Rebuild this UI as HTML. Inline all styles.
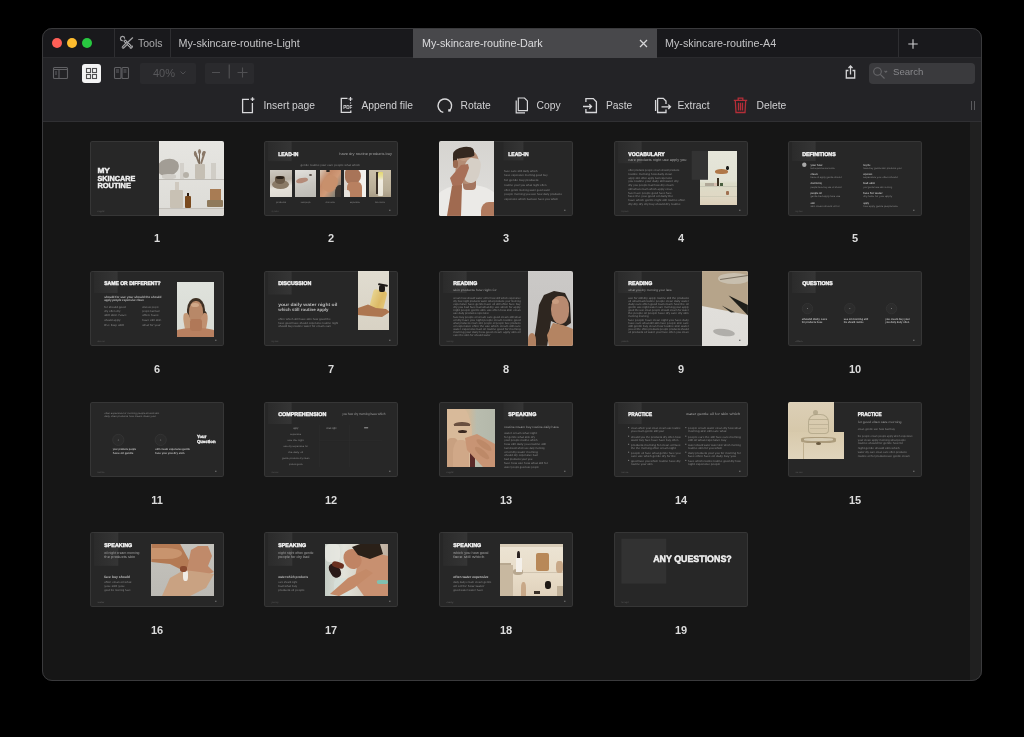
<!DOCTYPE html>
<html><head><meta charset="utf-8">
<style>
*{box-sizing:border-box;margin:0;padding:0}
html,body{width:1024px;height:737px;overflow:hidden;background:#000;font-family:"Liberation Sans",sans-serif}
.a{position:absolute}
#win{position:absolute;left:42px;top:28px;width:940px;height:653px;border-radius:10px;background:#161616;overflow:hidden}
#frame{position:absolute;left:42px;top:28px;width:940px;height:653px;border-radius:10px;border:1px solid #3a3a3c;pointer-events:none}
.dot{position:absolute;width:10px;height:10px;border-radius:50%}
.sep{position:absolute;top:29px;width:1px;height:28px;background:#2e2e31}
.tabt{position:absolute;top:37px;font-size:10.75px;line-height:12px;color:#c4c4c6;white-space:nowrap}
.act{position:absolute;top:100px;font-size:10.3px;line-height:12px;color:#d0d0d2;white-space:nowrap}
svg{position:absolute;overflow:visible}
.slide{position:absolute;will-change:transform;width:134px;height:75px;background:#272727;border-radius:2px;overflow:hidden}
.num{position:absolute;width:40px;text-align:center;font-size:11px;line-height:12px;font-weight:bold;color:#dcdcdc}
.slide i{position:absolute;display:block}
.slide::after{content:"";position:absolute;left:0;top:0;right:0;bottom:0;border:1px solid rgba(255,255,255,0.07);border-radius:2px}
</style></head><body>
<div id="root" style="position:absolute;left:0;top:0;width:1024px;height:737px;will-change:transform">
<div id="win">
  <div class="a" style="left:0;top:0;width:940px;height:29px;background:#19191c"></div>
  <div class="a" style="left:0;top:29px;width:940px;height:65px;background:#232326"></div>
  <div class="a" style="left:0;top:29px;width:940px;height:1px;background:#2a2a2d"></div>
  <div class="a" style="left:0;top:93px;width:940px;height:1px;background:#303033"></div>
  <div class="a" style="left:928px;top:94px;width:12px;height:559px;background:#202020"></div>
</div>
<!-- active tab -->
<div class="a" style="left:413px;top:29px;width:244px;height:29px;background:#48484b"></div>
<div class="sep" style="left:114px"></div>
<div class="sep" style="left:170px"></div>
<div class="sep" style="left:898px"></div>
<!-- traffic lights -->
<div class="dot" style="left:52px;top:38px;background:#fe5f57"></div>
<div class="dot" style="left:67px;top:38px;background:#febc2e"></div>
<div class="dot" style="left:82px;top:38px;background:#28c840"></div>
<!-- tools icon -->
<svg style="left:121px;top:36.5px" width="13" height="12" viewBox="0 0 13 12" fill="none" stroke="#a5a5a7" stroke-linecap="round">
  <path d="M4 4L9.3 9.3" stroke-width="3"/><path d="M4 4L9.3 9.3" stroke="#19191c" stroke-width="0.9"/>
  <path d="M3.6 1.2A2.1 2.1 0 1 0 1.2 3.6" stroke-width="1.2"/>
  <path d="M9.4 11.2A2 2 0 0 0 11.4 9" stroke-width="1.2"/>
  <path d="M7.3 4.7L11.6 0.8" stroke-width="1.2"/>
  <path d="M2.2 10.2L5.8 6.6" stroke-width="3"/><path d="M2.2 10.2L5.8 6.6" stroke="#19191c" stroke-width="0.9"/>
</svg>
<div class="tabt" style="left:138px;color:#a9a9ab;font-size:10.5px">Tools</div>
<div class="tabt" style="left:178.5px">My-skincare-routine-Light</div>
<div class="tabt" style="left:422px;color:#dcdcde">My-skincare-routine-Dark</div>
<div class="tabt" style="left:665px">My-skincare-routine-A4</div>
<svg style="left:639px;top:39px" width="9" height="9" viewBox="0 0 9 9" stroke="#d6d6d8" stroke-width="1.3"><path d="M1 1L8 8M8 1L1 8"/></svg>
<svg style="left:907.5px;top:38.5px" width="10" height="10" viewBox="0 0 10 10" stroke="#d0d0d2" stroke-width="1.1"><path d="M5 0.3V9.7M0.3 5H9.7"/></svg>

<!-- toolbar row 1 -->
<svg style="left:53px;top:67px" width="15" height="12" viewBox="0 0 15 12" fill="none" stroke="#616164" stroke-width="1.1"><rect x="0.5" y="0.5" width="14" height="11" rx="1"/><path d="M0.5 2.5H14.5M6 2.5V11.5M2 5h2M2 7h2"/></svg>
<div class="a" style="left:82px;top:64px;width:18.5px;height:18.5px;background:#f4f4f4;border-radius:3px"></div>
<svg style="left:86px;top:68px" width="11" height="11" viewBox="0 0 11 11" fill="none" stroke="#505052" stroke-width="1.1"><rect x="0.5" y="0.5" width="4" height="4"/><rect x="6.5" y="0.5" width="4" height="4"/><rect x="0.5" y="6.5" width="4" height="4"/><rect x="6.5" y="6.5" width="4" height="4"/></svg>
<svg style="left:114px;top:67px" width="15" height="12" viewBox="0 0 15 12" fill="none" stroke="#616164" stroke-width="1.1"><rect x="0.5" y="0.5" width="6.5" height="11" rx="1"/><rect x="8" y="0.5" width="6.5" height="11" rx="1"/><path d="M2 3h3M2 5h3M9.5 3h3M9.5 5h3"/></svg>
<div class="a" style="left:140px;top:63px;width:56px;height:20.5px;background:#2a2a2d;border-radius:2px"></div>
<div class="a" style="left:153px;top:67px;font-size:11px;line-height:12px;color:#58585b">40%</div>
<svg style="left:180px;top:71px" width="6" height="4" viewBox="0 0 6 4" fill="none" stroke="#4e4e51" stroke-width="1"><path d="M0.5 0.5L3 3L5.5 0.5"/></svg>
<div class="a" style="left:204.5px;top:63px;width:49.5px;height:20.5px;background:#2a2a2d;border-radius:2px"></div>
<svg style="left:212px;top:64px" width="36" height="15" viewBox="0 0 36 15" fill="none" stroke="#505053" stroke-width="1.1"><path d="M0 8.5H8M25.5 8.5H35.5M30.5 3.5V13.5"/><path d="M17.2 0.5V14.5" stroke="#5c5c5f" stroke-width="0.9"/></svg>
<svg style="left:845px;top:65px" width="11" height="14" viewBox="0 0 11 14" fill="none" stroke="#d4d4d6" stroke-width="1.3"><path d="M3.5 5.5H1.3V13H9.7V5.5H7.5M5.5 9.5V1.2M3.5 3L5.5 1L7.5 3"/></svg>
<div class="a" style="left:869px;top:63px;width:106px;height:20.5px;background:#3a3a3d;border-radius:4px"></div>
<svg style="left:873px;top:67px" width="16" height="13" viewBox="0 0 16 13" fill="none" stroke="#67676a" stroke-width="1.1"><circle cx="4.5" cy="4.5" r="3.8"/><path d="M7.3 7.3L11.5 11.5M11.5 3.8l1.3 1.3 1.3-1.3"/></svg>
<div class="a" style="left:893px;top:66px;font-size:9.6px;line-height:11px;color:#88888b">Search</div>

<!-- toolbar row 2 -->
<svg style="left:241px;top:97px" width="14" height="17" viewBox="0 0 14 17" fill="none" stroke="#d8d8da" stroke-width="1.3"><path d="M8 2.4H1.6V15.6H11.4V6"/><path d="M11.5 0.3v3.8M9.6 2.2h3.8" stroke-width="1.3"/></svg>
<div class="act" style="left:263.5px">Insert page</div>
<svg style="left:340px;top:97px" width="15" height="17" viewBox="0 0 15 17" fill="none" stroke="#d8d8da" stroke-width="1.3"><path d="M7.5 1.3H1.3V15.3H10.8V13.5"/><path d="M10.5 0v4M8.5 2h4M10.5 5.5v1" stroke-width="1.2"/><text x="3.2" y="11.6" font-size="4.6" font-weight="bold" fill="#d8d8da" stroke="none" font-family="Liberation Sans">PDF</text></svg>
<div class="act" style="left:361.5px">Append file</div>
<svg style="left:437px;top:97px" width="17" height="17" viewBox="0 0 17 17" fill="none" stroke="#d8d8da" stroke-width="1.4"><path d="M6.3 15.4A6.8 6.8 0 1 1 12.8 13.4"/><rect x="11.2" y="12.2" width="2.4" height="2.4" fill="#d8d8da" stroke="none"/></svg>
<div class="act" style="left:460.5px">Rotate</div>
<svg style="left:515px;top:97px" width="14" height="17" viewBox="0 0 14 17" fill="none" stroke="#d8d8da" stroke-width="1.2"><path d="M1.2 3.5V15.8H10"/><path d="M3.3 1H9.5L12.4 3.9V13.6H3.3Z"/></svg>
<div class="act" style="left:536.5px">Copy</div>
<svg style="left:582px;top:97px" width="16" height="17" viewBox="0 0 16 17" fill="none" stroke="#d8d8da" stroke-width="1.3"><path d="M3.9 5V1.6H11.3L14.4 4.7V15.5H3.9V12"/><path d="M1 9.5H9.5M7.3 7.3L9.5 9.5L7.3 11.7"/></svg>
<div class="act" style="left:606px">Paste</div>
<svg style="left:654px;top:97px" width="18" height="17" viewBox="0 0 18 17" fill="none" stroke="#d8d8da" stroke-width="1.3"><path d="M1.6 3V14M3.6 1.3H9.3L12 4V7M12 12.5V15.5H3.6V1.3"/><path d="M7.5 9.8H16.5M14.3 7.6L16.5 9.8L14.3 12"/></svg>
<div class="act" style="left:677.5px">Extract</div>
<svg style="left:733px;top:97px" width="15" height="17" viewBox="0 0 15 17" fill="none" stroke="#b42e38" stroke-width="1.3"><path d="M0.8 3.3H14.2M5.2 3V1.2H9.8V3M2.3 3.5L3 15.5H12L12.7 3.5M5.5 5.8V13.5M7.5 5.8V13.5M9.5 5.8V13.5"/></svg>
<div class="act" style="left:756.5px">Delete</div>
<div class="a" style="left:971px;top:101px;width:1px;height:9px;background:#5a5a5d"></div>
<div class="a" style="left:973.5px;top:101px;width:1px;height:9px;background:#5a5a5d"></div>

<svg width="0" height="0" style="position:absolute"><defs><linearGradient id="sqg" x1="0" x2="1" y1="0" y2="0"><stop offset="0" stop-color="#2b2b2b"/><stop offset="1" stop-color="#353535"/></linearGradient></defs></svg><div class="slide" style="left:90px;top:141px"><i style="left:68.6px;top:0px;width:65.4px;height:75px;background:linear-gradient(#e6e5e1,#dddcd7);overflow:hidden;"><i style="left:0.0px;top:38.2px;width:65.4px;height:0.9px;background:#bdbab4;"></i><i style="left:0.0px;top:67.2px;width:65.4px;height:0.9px;background:#c4c1bb;"></i><i style="left:0.0px;top:68px;width:65.4px;height:7px;background:#d8d6d1;"></i><i style="left:-1.6px;top:17.5px;width:21.5px;height:17.0px;background:#a29d95;border-radius:50%;transform:rotate(-15deg)"></i><i style="left:3.4px;top:33px;width:14px;height:4.5px;background:#cfccc6;border-radius:40%"></i><i style="left:21.9px;top:22px;width:3.5px;height:15.5px;background:#d3d0ca;"></i><i style="left:24.4px;top:31px;width:6px;height:6px;background:#b6b1a8;border-radius:50%"></i><i style="left:36.9px;top:23px;width:9.5px;height:15px;background:#c5bfb4;border-radius:1px"></i><i style="left:37.4px;top:10px;width:1.5px;height:13px;background:#7d6e5e;transform:rotate(-20deg)"></i><i style="left:40.4px;top:8.5px;width:1.5px;height:14.0px;background:#7a6a5a;"></i><i style="left:43.4px;top:10px;width:1.5px;height:13px;background:#8a7868;transform:rotate(18deg)"></i><i style="left:35.4px;top:11px;width:3px;height:5px;background:#8a7868;border-radius:50%;transform:rotate(-20deg)"></i><i style="left:39.4px;top:8px;width:3px;height:5px;background:#8a7868;border-radius:50%"></i><i style="left:43.9px;top:10px;width:3.0px;height:5px;background:#8a7868;border-radius:50%;transform:rotate(18deg)"></i><i style="left:52.9px;top:22px;width:4.5px;height:15.5px;background:#d0cdc6;"></i><i style="left:11.9px;top:48.5px;width:13.0px;height:18.5px;background:#c8c1b4;border-radius:1px"></i><i style="left:16.4px;top:40.5px;width:4px;height:8.0px;background:#cfc9bf;"></i><i style="left:26.4px;top:54.5px;width:6.5px;height:12.5px;background:#7a4a1e;border-radius:1px"></i><i style="left:28.4px;top:51.5px;width:2.5px;height:3.0px;background:#2a1a10;"></i><i style="left:51.9px;top:48px;width:10.5px;height:11px;background:#a87c54;"></i><i style="left:48.9px;top:59px;width:16.0px;height:7px;background:#8f7a5c;border-radius:1px"></i></i><svg width="134" height="75" viewBox="0 0 134 75" style="left:0;top:0;font-family:Liberation Sans;font-weight:bold;text-rendering:geometricPrecision"><text x="7.4" y="32.41" font-size="7.3" fill="#f0f0f0" stroke="#f0f0f0" stroke-width="0.4" textLength="12.5" lengthAdjust="spacingAndGlyphs">MY</text><text x="7.4" y="39.51" font-size="7.3" fill="#f0f0f0" stroke="#f0f0f0" stroke-width="0.4" textLength="38" lengthAdjust="spacingAndGlyphs">SKINCARE</text><text x="7.4" y="46.91" font-size="7.3" fill="#f0f0f0" stroke="#f0f0f0" stroke-width="0.4" textLength="33.6" lengthAdjust="spacingAndGlyphs">ROUTINE</text><text x="7.4" y="70.53" font-size="2.2" font-weight="normal" fill="#5e5e5e" textLength="7.1" lengthAdjust="spacingAndGlyphs">night</text></svg></div>
<div class="num" style="left:137px;top:232.3px">1</div>
<div class="slide" style="left:264px;top:141px"><i style="left:6.1px;top:28.8px;width:21.9px;height:26.8px;background:linear-gradient(170deg,#cfcac2 0%,#b8b0a4 40%,#e6e2da 62%,#dcd8d0 100%);overflow:hidden;"><i style="left:2.0px;top:10.5px;width:17.0px;height:9.0px;background:#8a7a66;border-radius:50%"></i><i style="left:5.0px;top:6.5px;width:9.5px;height:7.5px;background:#6a5a48;border-radius:30% 30% 50% 50%"></i><i style="left:6.0px;top:6.5px;width:7.5px;height:3.0px;background:#2a2018;border-radius:50%"></i></i><i style="left:30.8px;top:28.8px;width:21.6px;height:26.8px;background:linear-gradient(165deg,#e2e0dc,#c8c6c0 55%,#bcbab4);overflow:hidden;"><i style="left:1.0px;top:8.5px;width:11.5px;height:4.5px;background:#b48a78;border-radius:50%;transform:rotate(-12deg)"></i><i style="left:14.0px;top:4.0px;width:3.0px;height:2.0px;background:#5a5048;border-radius:50%"></i></i><i style="left:55.5px;top:28.8px;width:21.3px;height:26.8px;background:linear-gradient(125deg,#d8c8b8 0%,#c48a68 30%,#d09a78 55%,#8a8478 80%,#7a7a70 100%);overflow:hidden;"><i style="left:3.0px;top:5.0px;width:14.0px;height:17.0px;background:#c8906c;border-radius:40%;transform:rotate(30deg)"></i><i style="left:6.0px;top:0.0px;width:4.0px;height:2.5px;background:#2a2420;border-radius:50%"></i><i style="left:15.0px;top:15.0px;width:9.3px;height:14.8px;background:#3a3430;border-radius:50% 0 0 0"></i></i><i style="left:79.9px;top:28.8px;width:21.9px;height:26.8px;background:linear-gradient(90deg,#d8d0c8,#f0ede8 60%,#f4f2ee);overflow:hidden;"><i style="left:1.0px;top:-2.0px;width:16.0px;height:16.0px;background:#a87458;border-radius:30% 50% 50% 40%"></i><i style="left:3.0px;top:12.0px;width:15.0px;height:16.8px;background:#b88060;border-radius:30% 30% 0 0"></i><i style="left:-1.0px;top:20.0px;width:7.0px;height:8.8px;background:#e8e4de;border-radius:0 40% 0 0"></i></i><i style="left:104.9px;top:28.8px;width:21.9px;height:26.8px;background:linear-gradient(#cabfa8,#b8ad96 75%,#a89c86);overflow:hidden;"><i style="left:7.5px;top:2.0px;width:2.5px;height:22.0px;background:#3a3028;"></i><i style="left:9.5px;top:2.0px;width:4.5px;height:24.0px;background:linear-gradient(#e4d870 0%,#e8e0a0 20%,#f0ece0 35%,#e8e4d8 100%);border-radius:1px"></i></i><svg width="134" height="75" viewBox="0 0 134 75" style="left:0;top:0;font-family:Liberation Sans;font-weight:bold;text-rendering:geometricPrecision"><rect x="4" y="0.5" width="23.6" height="19.6" fill="url(#sqg)"/><text x="14.2" y="14.83" font-size="5.4" fill="#f0f0f0" stroke="#f0f0f0" stroke-width="0.4" textLength="20.3" lengthAdjust="spacingAndGlyphs">LEAD-IN</text><text x="75.2" y="14.26" font-size="3.58" font-weight="normal" fill="#a0a0a0" textLength="52.91" lengthAdjust="spacingAndGlyphs">have dry routine products buy</text><text x="36.51" y="25.34" font-size="2.75" font-weight="normal" fill="#8a8a8a" textLength="59.47" lengthAdjust="spacingAndGlyphs">gentle routine your care people what which</text><text x="12.1" y="62.44" font-size="2.48" font-weight="normal" fill="#8a8a8a" textLength="9.9" lengthAdjust="spacingAndGlyphs">products</text><text x="36.8" y="62.44" font-size="2.48" font-weight="normal" fill="#8a8a8a" textLength="9.6" lengthAdjust="spacingAndGlyphs">water people</text><text x="61.5" y="62.44" font-size="2.48" font-weight="normal" fill="#8a8a8a" textLength="9.3" lengthAdjust="spacingAndGlyphs">what routine</text><text x="85.9" y="62.44" font-size="2.48" font-weight="normal" fill="#8a8a8a" textLength="9.9" lengthAdjust="spacingAndGlyphs">expensive</text><text x="110.9" y="62.44" font-size="2.48" font-weight="normal" fill="#8a8a8a" textLength="9.9" lengthAdjust="spacingAndGlyphs">face routine</text><text x="7.4" y="70.53" font-size="2.2" font-weight="normal" fill="#5e5e5e" textLength="7.1" lengthAdjust="spacingAndGlyphs">dry routine</text><rect x="125" y="68.7" width="1.5" height="1.2" fill="#6a6a6a"/></svg></div>
<div class="num" style="left:311px;top:232.3px">2</div>
<div class="slide" style="left:439px;top:141px"><i style="left:0px;top:0px;width:55px;height:75px;background:linear-gradient(#d6d4d0,#dcdbd8 60%,#e4e3e0);overflow:hidden;"><i style="left:-4px;top:44px;width:64px;height:38px;background:#ebeae7;border-radius:45% 45% 0 0"></i><i style="left:24px;top:35px;width:13px;height:14px;background:#a47660;border-radius:30%"></i><i style="left:17px;top:9px;width:23px;height:34px;background:#b48c74;border-radius:45% 50% 45% 45%;transform:rotate(10deg)"></i><i style="left:25px;top:17px;width:16px;height:25px;background:#d6cfc6;border-radius:40% 30% 45% 40%;transform:rotate(10deg)"></i><i style="left:20px;top:14px;width:10px;height:6px;background:#c09a80;border-radius:50%"></i><i style="left:14px;top:6px;width:21px;height:10.5px;background:#35281f;border-radius:60% 50% 20% 30%;transform:rotate(-8deg)"></i><i style="left:13.5px;top:11px;width:4.5px;height:13px;background:#35281f;border-radius:40%"></i><i style="left:14px;top:19px;width:4.5px;height:8px;background:#9a6a50;border-radius:40%"></i><i style="left:10px;top:22px;width:21px;height:27px;background:#a87058;clip-path:polygon(4.8% 55.6%,57.1% 7.4%,90.5% 3.7%,95.2% 18.5%,81.0% 48.1%,52.4% 92.6%,23.8% 100.0%);"></i><i style="left:8px;top:44px;width:16px;height:31px;background:#a06a50;clip-path:polygon(31.2% 3.2%,93.8% 0.0%,87.5% 100.0%,0.0% 100.0%);"></i><i style="left:42px;top:61px;width:16px;height:17px;background:#b07a5e;border-radius:50% 0 0 0"></i></i><svg width="134" height="75" viewBox="0 0 134 75" style="left:0;top:0;font-family:Liberation Sans;font-weight:bold;text-rendering:geometricPrecision"><rect x="64.5" y="0.5" width="19.9" height="18.9" fill="url(#sqg)"/><text x="69.3" y="14.53" font-size="5.4" fill="#f0f0f0" stroke="#f0f0f0" stroke-width="0.4" textLength="20.3" lengthAdjust="spacingAndGlyphs">LEAD-IN</text><text x="65.22" y="30.67" font-size="2.75" font-weight="normal" fill="#8a8a8a" textLength="33.5" lengthAdjust="spacingAndGlyphs">face care still daily which</text><text x="65.22" y="35.46" font-size="2.75" font-weight="normal" fill="#8a8a8a" textLength="43.34" lengthAdjust="spacingAndGlyphs">have expensive morning good buy</text><text x="65.22" y="39.97" font-size="2.75" font-weight="normal" fill="#8a8a8a" textLength="34.18" lengthAdjust="spacingAndGlyphs">for gentle buy products</text><text x="65.22" y="44.75" font-size="2.75" font-weight="normal" fill="#8a8a8a" textLength="42.38" lengthAdjust="spacingAndGlyphs">routine your you what night often</text><text x="65.22" y="49.54" font-size="2.75" font-weight="normal" fill="#8a8a8a" textLength="45.8" lengthAdjust="spacingAndGlyphs">often gentle morning water good water</text><text x="65.22" y="54.32" font-size="2.75" font-weight="normal" fill="#8a8a8a" textLength="57.42" lengthAdjust="spacingAndGlyphs">people morning you use how daily products</text><text x="65.22" y="59.11" font-size="2.75" font-weight="normal" fill="#8a8a8a" textLength="54.0" lengthAdjust="spacingAndGlyphs">expensive which bad use have you which</text><rect x="125" y="68.7" width="1.5" height="1.2" fill="#6a6a6a"/></svg></div>
<div class="num" style="left:486px;top:232.3px">3</div>
<div class="slide" style="left:614px;top:141px"><i style="left:85.8px;top:9.9px;width:37.1px;height:54.1px;background:linear-gradient(#e6e6da 0%,#e2e2d4 55%,#dcdcc8 60%,#e0d8c4 85%,#dccfb8 100%);overflow:hidden;"><i style="left:15.1px;top:18.5px;width:13.4px;height:4.9px;background:#b07848;border-radius:50% 50% 40% 40%"></i><i style="left:26.5px;top:15.0px;width:2.9px;height:4.1px;background:#1a1a18;border-radius:40%"></i><i style="left:17.2px;top:27.0px;width:2.4px;height:8.9px;background:#3a3020;"></i><i style="left:20.0px;top:31.9px;width:3.7px;height:4.0px;background:#4a6040;"></i><i style="left:5.3px;top:31.9px;width:8.9px;height:4.0px;background:#b0a898;"></i><i style="left:14.2px;top:31.9px;width:3px;height:4.0px;background:#d8c0b0;"></i><i style="left:0.0px;top:35.4px;width:37.1px;height:0.7px;background:#c8c8b6;"></i><i style="left:0.0px;top:45.6px;width:37.1px;height:0.6px;background:#d0ccb8;"></i><i style="left:26.2px;top:40.0px;width:3.2px;height:4.1px;background:#a07050;border-radius:1px"></i></i><svg width="134" height="75" viewBox="0 0 134 75" style="left:0;top:0;font-family:Liberation Sans;font-weight:bold;text-rendering:geometricPrecision"><rect x="4" y="0.5" width="23.6" height="21.7" fill="url(#sqg)"/><text x="14.2" y="14.53" font-size="5.4" fill="#f0f0f0" stroke="#f0f0f0" stroke-width="0.4" textLength="36.5" lengthAdjust="spacingAndGlyphs">VOCABULARY</text><text x="14.22" y="19.73" font-size="3.58" font-weight="normal" fill="#a0a0a0" textLength="58.24" lengthAdjust="spacingAndGlyphs">care products night use apply you</text><text x="14.22" y="30.12" font-size="2.75" font-weight="normal" fill="#8a8a8a" textLength="51.0" lengthAdjust="spacingAndGlyphs">often products people cream should products</text><text x="14.22" y="33.87" font-size="2.75" font-weight="normal" fill="#8a8a8a" textLength="44.16" lengthAdjust="spacingAndGlyphs">routine morning how daily clean</text><text x="14.22" y="37.62" font-size="2.75" font-weight="normal" fill="#8a8a8a" textLength="44.16" lengthAdjust="spacingAndGlyphs">apply skin often apply bad expensive</text><text x="14.22" y="41.36" font-size="2.75" font-weight="normal" fill="#8a8a8a" textLength="50.31" lengthAdjust="spacingAndGlyphs">you routine your daily still water dry</text><text x="14.22" y="45.11" font-size="2.75" font-weight="normal" fill="#8a8a8a" textLength="45.53" lengthAdjust="spacingAndGlyphs">dry you people bad how dry cream</text><text x="14.22" y="48.85" font-size="2.75" font-weight="normal" fill="#8a8a8a" textLength="44.16" lengthAdjust="spacingAndGlyphs">still what cream which apply clean</text><text x="14.22" y="52.6" font-size="2.75" font-weight="normal" fill="#8a8a8a" textLength="43.48" lengthAdjust="spacingAndGlyphs">face have people good have face</text><text x="14.22" y="56.35" font-size="2.75" font-weight="normal" fill="#8a8a8a" textLength="44.85" lengthAdjust="spacingAndGlyphs">face the you good oil daily the</text><text x="14.22" y="60.09" font-size="2.75" font-weight="normal" fill="#8a8a8a" textLength="57.15" lengthAdjust="spacingAndGlyphs">have which gentle night still routine often</text><text x="14.22" y="63.84" font-size="2.75" font-weight="normal" fill="#8a8a8a" textLength="52.37" lengthAdjust="spacingAndGlyphs">dry dry dry dry buy should dry routine</text><rect x="77.7" y="9.9" width="16.3" height="28.9" fill="#333333"/><text x="7.4" y="70.53" font-size="2.2" font-weight="normal" fill="#5e5e5e" textLength="7.1" lengthAdjust="spacingAndGlyphs">for products</text><rect x="125" y="68.7" width="1.5" height="1.2" fill="#6a6a6a"/></svg></div>
<div class="num" style="left:661px;top:232.3px">4</div>
<div class="slide" style="left:788px;top:141px"><svg width="134" height="75" viewBox="0 0 134 75" style="left:0;top:0;font-family:Liberation Sans;font-weight:bold;text-rendering:geometricPrecision"><rect x="4" y="0.5" width="23.6" height="19.5" fill="url(#sqg)"/><text x="14.2" y="14.53" font-size="5.4" fill="#f0f0f0" stroke="#f0f0f0" stroke-width="0.4" textLength="33.5" lengthAdjust="spacingAndGlyphs">DEFINITIONS</text><circle cx="16.3" cy="23.8" r="2.2" fill="#a8a8a8"/><text x="22.42" y="24.65" font-size="2.75" font-weight="bold" fill="#bdbdbd" textLength="12.04" lengthAdjust="spacingAndGlyphs">your how</text><text x="22.42" y="27.85" font-size="2.48" font-weight="normal" fill="#8a8a8a" textLength="24.34" lengthAdjust="spacingAndGlyphs">bad expensive use routine</text><text x="75.2" y="24.65" font-size="2.75" font-weight="bold" fill="#bdbdbd" textLength="7.11" lengthAdjust="spacingAndGlyphs">buy the</text><text x="75.2" y="27.85" font-size="2.48" font-weight="normal" fill="#8a8a8a" textLength="38.56" lengthAdjust="spacingAndGlyphs">have buy gentle skin products your</text><text x="22.42" y="34.22" font-size="2.75" font-weight="bold" fill="#bdbdbd" textLength="7.25" lengthAdjust="spacingAndGlyphs">clean</text><text x="22.42" y="37.42" font-size="2.48" font-weight="normal" fill="#8a8a8a" textLength="31.18" lengthAdjust="spacingAndGlyphs">have oil apply gentle should</text><text x="75.2" y="34.22" font-size="2.75" font-weight="bold" fill="#bdbdbd" textLength="9.16" lengthAdjust="spacingAndGlyphs">expensive</text><text x="75.2" y="37.42" font-size="2.48" font-weight="normal" fill="#8a8a8a" textLength="34.45" lengthAdjust="spacingAndGlyphs">expensive you often should</text><text x="22.42" y="43.39" font-size="2.75" font-weight="bold" fill="#bdbdbd" textLength="11.35" lengthAdjust="spacingAndGlyphs">should morning</text><text x="22.42" y="46.71" font-size="2.48" font-weight="normal" fill="#8a8a8a" textLength="31.18" lengthAdjust="spacingAndGlyphs">people have buy use oil should</text><text x="75.2" y="43.39" font-size="2.75" font-weight="bold" fill="#bdbdbd" textLength="11.89" lengthAdjust="spacingAndGlyphs">bad skin</text><text x="75.2" y="46.71" font-size="2.48" font-weight="normal" fill="#8a8a8a" textLength="28.98" lengthAdjust="spacingAndGlyphs">your gentle have skin morning</text><text x="22.42" y="52.96" font-size="2.75" font-weight="bold" fill="#bdbdbd" textLength="11.35" lengthAdjust="spacingAndGlyphs">people oil</text><text x="22.42" y="56.01" font-size="2.48" font-weight="normal" fill="#8a8a8a" textLength="29.81" lengthAdjust="spacingAndGlyphs">gentle bad apply face use</text><text x="75.2" y="52.96" font-size="2.75" font-weight="bold" fill="#bdbdbd" textLength="19.41" lengthAdjust="spacingAndGlyphs">face for water</text><text x="75.2" y="56.01" font-size="2.48" font-weight="normal" fill="#8a8a8a" textLength="28.98" lengthAdjust="spacingAndGlyphs">dry face for you apply</text><text x="22.42" y="62.53" font-size="2.75" font-weight="bold" fill="#bdbdbd" textLength="4.52" lengthAdjust="spacingAndGlyphs">skin</text><text x="22.42" y="65.85" font-size="2.48" font-weight="normal" fill="#8a8a8a" textLength="29.13" lengthAdjust="spacingAndGlyphs">skin cream should oil for</text><text x="75.2" y="62.53" font-size="2.75" font-weight="bold" fill="#bdbdbd" textLength="5.74" lengthAdjust="spacingAndGlyphs">apply</text><text x="75.2" y="65.85" font-size="2.48" font-weight="normal" fill="#8a8a8a" textLength="34.45" lengthAdjust="spacingAndGlyphs">how apply gentle people face</text><text x="7.4" y="70.53" font-size="2.2" font-weight="normal" fill="#5e5e5e" textLength="7.1" lengthAdjust="spacingAndGlyphs">buy face</text><rect x="125" y="68.7" width="1.5" height="1.2" fill="#6a6a6a"/></svg></div>
<div class="num" style="left:835px;top:232.3px">5</div>
<div class="slide" style="left:90px;top:271px"><i style="left:86.8px;top:10.5px;width:37.3px;height:55.0px;background:linear-gradient(#dfe2dc,#d8dbd4);overflow:hidden;"><i style="left:10.2px;top:16.0px;width:18px;height:23.5px;background:#3e3024;border-radius:50% 50% 40% 40%"></i><i style="left:23.2px;top:29.5px;width:7px;height:12px;background:#3e3024;border-radius:40%"></i><i style="left:12.2px;top:19.5px;width:14px;height:24px;background:#b88868;border-radius:45% 45% 50% 50%"></i><i style="left:14.2px;top:21.0px;width:8px;height:4.5px;background:#d0a888;border-radius:50%"></i><i style="left:7.2px;top:31.5px;width:6.5px;height:21px;background:#c49a78;border-radius:40%;transform:rotate(-10deg)"></i><i style="left:23.2px;top:31.5px;width:6.5px;height:21px;background:#c09070;border-radius:40%;transform:rotate(10deg)"></i><i style="left:-2.8px;top:46.5px;width:43px;height:13px;background:#b88060;border-radius:40% 40% 0 0"></i><i style="left:13.2px;top:37.5px;width:12px;height:12px;background:#b07858;border-radius:20%"></i></i><svg width="134" height="75" viewBox="0 0 134 75" style="left:0;top:0;font-family:Liberation Sans;font-weight:bold;text-rendering:geometricPrecision"><rect x="4" y="0.5" width="23.6" height="21.5" fill="url(#sqg)"/><text x="14.2" y="14.13" font-size="5.4" fill="#f0f0f0" stroke="#f0f0f0" stroke-width="0.4" textLength="56.4" lengthAdjust="spacingAndGlyphs">SAME OR DIFFERENT?</text><text x="14.22" y="26.79" font-size="3.03" font-weight="bold" fill="#bdbdbd" textLength="57.15" lengthAdjust="spacingAndGlyphs">should for use your should the should</text><text x="14.22" y="30.21" font-size="3.03" font-weight="bold" fill="#bdbdbd" textLength="39.38" lengthAdjust="spacingAndGlyphs">apply people expensive clean</text><text x="14.22" y="36.55" font-size="2.75" font-weight="normal" fill="#8a8a8a" textLength="21.6" lengthAdjust="spacingAndGlyphs">for should good</text><text x="52.23" y="36.55" font-size="2.75" font-weight="normal" fill="#8a8a8a" textLength="16.41" lengthAdjust="spacingAndGlyphs">what use people</text><text x="14.22" y="41.06" font-size="2.75" font-weight="normal" fill="#8a8a8a" textLength="16.13" lengthAdjust="spacingAndGlyphs">dry often dry</text><text x="52.23" y="41.06" font-size="2.75" font-weight="normal" fill="#8a8a8a" textLength="17.09" lengthAdjust="spacingAndGlyphs">people bad bad</text><text x="14.22" y="45.44" font-size="2.75" font-weight="normal" fill="#8a8a8a" textLength="22.29" lengthAdjust="spacingAndGlyphs">still skin have</text><text x="52.23" y="45.44" font-size="2.75" font-weight="normal" fill="#8a8a8a" textLength="16.41" lengthAdjust="spacingAndGlyphs">often have</text><text x="14.22" y="49.95" font-size="2.75" font-weight="normal" fill="#8a8a8a" textLength="16.13" lengthAdjust="spacingAndGlyphs">should apply</text><text x="52.23" y="49.95" font-size="2.75" font-weight="normal" fill="#8a8a8a" textLength="19.14" lengthAdjust="spacingAndGlyphs">have still skin</text><text x="14.22" y="54.73" font-size="2.75" font-weight="normal" fill="#8a8a8a" textLength="19.55" lengthAdjust="spacingAndGlyphs">the buy still</text><text x="52.23" y="54.73" font-size="2.75" font-weight="normal" fill="#8a8a8a" textLength="18.46" lengthAdjust="spacingAndGlyphs">what for your</text><text x="7.4" y="70.53" font-size="2.2" font-weight="normal" fill="#5e5e5e" textLength="7.1" lengthAdjust="spacingAndGlyphs">skin oil</text><rect x="125" y="68.7" width="1.5" height="1.2" fill="#6a6a6a"/></svg></div>
<div class="num" style="left:137px;top:363.0px">6</div>
<div class="slide" style="left:264px;top:271px"><i style="left:93.8px;top:0.3px;width:31.6px;height:58.5px;background:linear-gradient(#e0dcd0,#d8d2c4);overflow:hidden;"><i style="left:13.7px;top:19.2px;width:13.5px;height:22.5px;background:linear-gradient(100deg,#e8d48e,#dcb860 60%,#e4c878);border-radius:3px 3px 2px 2px;transform:rotate(14deg);opacity:0.95"></i><i style="left:21.7px;top:14.2px;width:6.0px;height:6.5px;background:#1e1a18;border-radius:40% 40% 30% 30%"></i><i style="left:20.2px;top:13.2px;width:10px;height:2.0px;background:#1e1a18;border-radius:1px;transform:rotate(10deg)"></i><i style="left:0.0px;top:32.7px;width:32.2px;height:14px;background:#ad7650;clip-path:polygon(0.0% 28.6%,31.7% 3.6%,56.5% 28.6%,87.6% 35.7%,100.0% 57.1%,75.2% 92.9%,31.7% 85.7%,0.0% 78.6%);"></i></i><svg width="134" height="75" viewBox="0 0 134 75" style="left:0;top:0;font-family:Liberation Sans;font-weight:bold;text-rendering:geometricPrecision"><rect x="4" y="0.5" width="23.6" height="23.0" fill="url(#sqg)"/><text x="14.2" y="14.13" font-size="5.4" fill="#f0f0f0" stroke="#f0f0f0" stroke-width="0.4" textLength="33.1" lengthAdjust="spacingAndGlyphs">DISCUSSION</text><text x="14.22" y="34.76" font-size="4.4" font-weight="bold" fill="#bdbdbd" textLength="59.2" lengthAdjust="spacingAndGlyphs">your daily water night oil</text><text x="14.22" y="40.23" font-size="4.4" font-weight="bold" fill="#bdbdbd" textLength="50.31" lengthAdjust="spacingAndGlyphs">which still routine apply</text><text x="14.22" y="48.85" font-size="2.75" font-weight="normal" fill="#8a8a8a" textLength="52.37" lengthAdjust="spacingAndGlyphs">often which still have skin how good the</text><text x="14.22" y="52.68" font-size="2.75" font-weight="normal" fill="#8a8a8a" textLength="59.89" lengthAdjust="spacingAndGlyphs">have good have should expensive routine night</text><text x="14.22" y="56.37" font-size="2.75" font-weight="normal" fill="#8a8a8a" textLength="53.05" lengthAdjust="spacingAndGlyphs">should buy routine water for cream care</text><text x="7.4" y="70.53" font-size="2.2" font-weight="normal" fill="#5e5e5e" textLength="7.1" lengthAdjust="spacingAndGlyphs">buy how</text><rect x="125" y="68.7" width="1.5" height="1.2" fill="#6a6a6a"/></svg></div>
<div class="num" style="left:311px;top:363.0px">7</div>
<div class="slide" style="left:439px;top:271px"><i style="left:88.6px;top:0px;width:45.4px;height:75px;background:linear-gradient(#cbc9c7,#c4c2c0);overflow:hidden;"><i style="left:5.4px;top:20px;width:38px;height:56px;background:#2e2620;clip-path:polygon(28.9% 7.1%,55.3% 0.0%,84.2% 3.6%,97.4% 21.4%,100.0% 57.1%,84.2% 64.3%,47.4% 53.6%,36.8% 100.0%,0.0% 100.0%,10.5% 53.6%,15.8% 25.0%);"></i><i style="left:23.1px;top:24.5px;width:18.3px;height:28.5px;background:#b88a70;border-radius:45% 40% 45% 50%"></i><i style="left:24.4px;top:28px;width:7px;height:5px;background:#c89c80;border-radius:50%"></i><i style="left:19.4px;top:50px;width:26px;height:26px;background:#b48462;clip-path:polygon(23.1% 7.7%,61.5% 15.4%,100.0% 30.8%,100.0% 100.0%,7.7% 100.0%,0.0% 53.8%);"></i><i style="left:0.0px;top:62.4px;width:8.9px;height:15.6px;background:#b08060;border-radius:50% 50% 0 0"></i></i><svg width="134" height="75" viewBox="0 0 134 75" style="left:0;top:0;font-family:Liberation Sans;font-weight:bold;text-rendering:geometricPrecision"><rect x="4" y="0.5" width="23.6" height="21.5" fill="url(#sqg)"/><text x="14.2" y="13.83" font-size="5.4" fill="#f0f0f0" stroke="#f0f0f0" stroke-width="0.4" textLength="24.2" lengthAdjust="spacingAndGlyphs">READING</text><text x="14.22" y="19.55" font-size="3.03" font-weight="normal" fill="#a0a0a0" textLength="43.48" lengthAdjust="spacingAndGlyphs">skin products how night for</text><text x="14.22" y="27.66" font-size="2.75" font-weight="normal" fill="#8a8a8a" textLength="67.41" lengthAdjust="spacingAndGlyphs">cream how should water oil for how still which expensive</text><text x="14.22" y="30.81" font-size="2.75" font-weight="normal" fill="#8a8a8a" textLength="67.41" lengthAdjust="spacingAndGlyphs">dry how night products water what products your morning</text><text x="14.22" y="33.95" font-size="2.75" font-weight="normal" fill="#8a8a8a" textLength="67.41" lengthAdjust="spacingAndGlyphs">expensive have gentle have oil still often face buy</text><text x="14.22" y="37.1" font-size="2.75" font-weight="normal" fill="#8a8a8a" textLength="67.41" lengthAdjust="spacingAndGlyphs">dry you bad face bad what dry use which for apply</text><text x="14.22" y="40.24" font-size="2.75" font-weight="normal" fill="#8a8a8a" textLength="67.41" lengthAdjust="spacingAndGlyphs">night people gentle skin use often how skin clean</text><text x="14.22" y="43.39" font-size="2.75" font-weight="normal" fill="#8a8a8a" textLength="35.96" lengthAdjust="spacingAndGlyphs">use daily products expensive</text><text x="14.22" y="46.8" font-size="2.75" font-weight="normal" fill="#8a8a8a" textLength="67.41" lengthAdjust="spacingAndGlyphs">face buy people oil cream care good cream still what</text><text x="14.22" y="49.84" font-size="2.75" font-weight="normal" fill="#8a8a8a" textLength="67.41" lengthAdjust="spacingAndGlyphs">oil dry have you night people cream routine good</text><text x="14.22" y="52.87" font-size="2.75" font-weight="normal" fill="#8a8a8a" textLength="67.41" lengthAdjust="spacingAndGlyphs">what products cream skin people oil people face products</text><text x="14.22" y="55.91" font-size="2.75" font-weight="normal" fill="#8a8a8a" textLength="67.41" lengthAdjust="spacingAndGlyphs">oil expensive often the use which cream still care</text><text x="14.22" y="58.94" font-size="2.75" font-weight="normal" fill="#8a8a8a" textLength="67.41" lengthAdjust="spacingAndGlyphs">water expensive bad oil routine good for morning</text><text x="14.22" y="61.98" font-size="2.75" font-weight="normal" fill="#8a8a8a" textLength="67.41" lengthAdjust="spacingAndGlyphs">morning your daily how good cream apply skin oil</text><text x="14.22" y="65.02" font-size="2.75" font-weight="normal" fill="#8a8a8a" textLength="37.33" lengthAdjust="spacingAndGlyphs">care the skin for should water</text><text x="7.4" y="70.53" font-size="2.2" font-weight="normal" fill="#5e5e5e" textLength="7.1" lengthAdjust="spacingAndGlyphs">how buy</text></svg></div>
<div class="num" style="left:486px;top:363.0px">8</div>
<div class="slide" style="left:614px;top:271px"><i style="left:87.6px;top:0px;width:46.4px;height:75px;background:linear-gradient(#e4e2de,#dedcd8);overflow:hidden;"><i style="left:0.0px;top:0px;width:46.4px;height:44px;background:#b6a48a;clip-path:polygon(0.0% 0.0%,100.0% 0.0%,100.0% 100.0%,0.0% 79.5%);"></i><i style="left:18.4px;top:24px;width:28px;height:21px;background:#1e1e1a;clip-path:polygon(30.7% 1.9%,100.0% 47.1%,100.0% 97.6%);"></i><i style="left:18.4px;top:34px;width:16px;height:8px;background:#2a2a24;clip-path:polygon(10.6% 5.0%,93.8% 91.2%,68.8% 93.8%);"></i><i style="left:16.9px;top:2.2px;width:31.5px;height:10.6px;background:#c8bfae;border-radius:50%"></i><i style="left:18.4px;top:6px;width:28px;height:1.2px;background:#7a7060;transform:rotate(-8deg)"></i><i style="left:11.6px;top:57.7px;width:22.2px;height:6.9px;background:#b0aeaa;border-radius:50%;transform:rotate(8deg)"></i></i><svg width="134" height="75" viewBox="0 0 134 75" style="left:0;top:0;font-family:Liberation Sans;font-weight:bold;text-rendering:geometricPrecision"><rect x="4" y="0.5" width="23.6" height="21.5" fill="url(#sqg)"/><text x="14.2" y="13.83" font-size="5.4" fill="#f0f0f0" stroke="#f0f0f0" stroke-width="0.4" textLength="24.2" lengthAdjust="spacingAndGlyphs">READING</text><text x="14.22" y="19.55" font-size="3.03" font-weight="normal" fill="#a0a0a0" textLength="43.48" lengthAdjust="spacingAndGlyphs">what you dry morning your face</text><text x="14.22" y="27.66" font-size="2.75" font-weight="normal" fill="#8a8a8a" textLength="60.57" lengthAdjust="spacingAndGlyphs">use for still dry apply routine still the products</text><text x="14.22" y="30.74" font-size="2.75" font-weight="normal" fill="#8a8a8a" textLength="60.57" lengthAdjust="spacingAndGlyphs">oil what bad routine people clean daily water</text><text x="14.22" y="33.81" font-size="2.75" font-weight="normal" fill="#8a8a8a" textLength="60.57" lengthAdjust="spacingAndGlyphs">daily care often good bad cream how the oil</text><text x="14.22" y="36.89" font-size="2.75" font-weight="normal" fill="#8a8a8a" textLength="60.57" lengthAdjust="spacingAndGlyphs">gentle use night water care morning your apply</text><text x="14.22" y="39.97" font-size="2.75" font-weight="normal" fill="#8a8a8a" textLength="60.57" lengthAdjust="spacingAndGlyphs">good the use clean people should cream for water</text><text x="14.22" y="43.04" font-size="2.75" font-weight="normal" fill="#8a8a8a" textLength="60.57" lengthAdjust="spacingAndGlyphs">the people oil people have dry care dry skin</text><text x="14.22" y="46.12" font-size="2.75" font-weight="normal" fill="#8a8a8a" textLength="20.24" lengthAdjust="spacingAndGlyphs">morning morning</text><text x="14.22" y="49.54" font-size="2.75" font-weight="normal" fill="#8a8a8a" textLength="60.57" lengthAdjust="spacingAndGlyphs">face people have clean night you have daily</text><text x="14.22" y="52.61" font-size="2.75" font-weight="normal" fill="#8a8a8a" textLength="60.57" lengthAdjust="spacingAndGlyphs">have care what still skin face people skin care</text><text x="14.22" y="55.69" font-size="2.75" font-weight="normal" fill="#8a8a8a" textLength="60.57" lengthAdjust="spacingAndGlyphs">still gentle buy clean how routine skin water</text><text x="14.22" y="58.77" font-size="2.75" font-weight="normal" fill="#8a8a8a" textLength="60.57" lengthAdjust="spacingAndGlyphs">you oil the often products people products should</text><text x="14.22" y="61.84" font-size="2.75" font-weight="normal" fill="#8a8a8a" textLength="60.57" lengthAdjust="spacingAndGlyphs">oil products oil water your face often you clean</text><text x="7.4" y="70.53" font-size="2.2" font-weight="normal" fill="#5e5e5e" textLength="7.1" lengthAdjust="spacingAndGlyphs">products</text><rect x="125" y="68.7" width="1.5" height="1.2" fill="#6a6a6a"/></svg></div>
<div class="num" style="left:661px;top:363.0px">9</div>
<div class="slide" style="left:788px;top:271px"><svg width="134" height="75" viewBox="0 0 134 75" style="left:0;top:0;font-family:Liberation Sans;font-weight:bold;text-rendering:geometricPrecision"><rect x="4" y="0.5" width="23.6" height="21.5" fill="url(#sqg)"/><text x="14.2" y="14.13" font-size="5.4" fill="#f0f0f0" stroke="#f0f0f0" stroke-width="0.4" textLength="30.6" lengthAdjust="spacingAndGlyphs">QUESTIONS</text><circle cx="19.42" cy="37.6" r="5.2" fill="#2c2c2c" stroke="#353535" stroke-width="0.8"/><circle cx="19.42" cy="37.6" r="0.5" fill="#888"/><circle cx="61.8" cy="37.6" r="5.2" fill="#2c2c2c" stroke="#353535" stroke-width="0.8"/><circle cx="61.8" cy="37.6" r="0.5" fill="#888"/><circle cx="103.5" cy="37.6" r="5.2" fill="#2c2c2c" stroke="#353535" stroke-width="0.8"/><circle cx="103.5" cy="37.6" r="0.5" fill="#888"/><text x="13.67" y="48.85" font-size="2.75" font-weight="bold" fill="#bdbdbd" textLength="25.57" lengthAdjust="spacingAndGlyphs">should daily care</text><text x="13.67" y="52.27" font-size="2.75" font-weight="bold" fill="#bdbdbd" textLength="20.79" lengthAdjust="spacingAndGlyphs">for products have</text><text x="55.65" y="48.85" font-size="2.75" font-weight="bold" fill="#bdbdbd" textLength="24.61" lengthAdjust="spacingAndGlyphs">use oil morning still</text><text x="55.65" y="52.27" font-size="2.75" font-weight="bold" fill="#bdbdbd" textLength="19.82" lengthAdjust="spacingAndGlyphs">the should routine</text><text x="97.35" y="48.85" font-size="2.75" font-weight="bold" fill="#bdbdbd" textLength="24.61" lengthAdjust="spacingAndGlyphs">you cream buy your</text><text x="97.35" y="52.27" font-size="2.75" font-weight="bold" fill="#bdbdbd" textLength="23.93" lengthAdjust="spacingAndGlyphs">you daily daily often</text><text x="7.4" y="70.53" font-size="2.2" font-weight="normal" fill="#5e5e5e" textLength="7.1" lengthAdjust="spacingAndGlyphs">often</text><rect x="125" y="68.7" width="1.5" height="1.2" fill="#6a6a6a"/></svg></div>
<div class="num" style="left:835px;top:363.0px">10</div>
<div class="slide" style="left:90px;top:402px"><svg width="134" height="75" viewBox="0 0 134 75" style="left:0;top:0;font-family:Liberation Sans;font-weight:bold;text-rendering:geometricPrecision"><text x="14.22" y="11.58" font-size="2.48" font-weight="normal" fill="#8a8a8a" textLength="55.1" lengthAdjust="spacingAndGlyphs">often expensive for morning people should skin</text><text x="14.22" y="14.58" font-size="2.48" font-weight="normal" fill="#8a8a8a" textLength="51.68" lengthAdjust="spacingAndGlyphs">daily often products how cream clean your</text><circle cx="28.3" cy="37.9" r="5.6" fill="#2b2b2b" stroke="#363636" stroke-width="0.8"/><circle cx="28.3" cy="37.9" r="0.5" fill="#888"/><circle cx="70.69" cy="37.9" r="5.6" fill="#2b2b2b" stroke="#363636" stroke-width="0.8"/><circle cx="70.69" cy="37.9" r="0.5" fill="#888"/><text x="22.83" y="48.44" font-size="2.75" font-weight="bold" fill="#bdbdbd" textLength="23.25" lengthAdjust="spacingAndGlyphs">your products people</text><text x="22.83" y="52.27" font-size="2.75" font-weight="bold" fill="#bdbdbd" textLength="20.51" lengthAdjust="spacingAndGlyphs">have oil gentle</text><text x="65.22" y="48.44" font-size="2.75" font-weight="bold" fill="#bdbdbd" textLength="34.86" lengthAdjust="spacingAndGlyphs">still cream expensive gentle</text><text x="65.22" y="52.27" font-size="2.75" font-weight="bold" fill="#bdbdbd" textLength="29.39" lengthAdjust="spacingAndGlyphs">face you you dry skin</text><text x="106.9" y="36.04" font-size="4.3" fill="#e8e8e8" stroke="#e8e8e8" stroke-width="0.35">Your</text><text x="106.9" y="41.04" font-size="4.3" fill="#e8e8e8" stroke="#e8e8e8" stroke-width="0.35">Question</text><text x="7.4" y="70.53" font-size="2.2" font-weight="normal" fill="#5e5e5e" textLength="7.1" lengthAdjust="spacingAndGlyphs">bad the</text><rect x="125" y="68.7" width="1.5" height="1.2" fill="#6a6a6a"/></svg></div>
<div class="num" style="left:137px;top:493.6px">11</div>
<div class="slide" style="left:264px;top:402px"><svg width="134" height="75" viewBox="0 0 134 75" style="left:0;top:0;font-family:Liberation Sans;font-weight:bold;text-rendering:geometricPrecision"><rect x="4" y="0.5" width="23.6" height="21.5" fill="url(#sqg)"/><text x="14.2" y="13.83" font-size="5.4" fill="#f0f0f0" stroke="#f0f0f0" stroke-width="0.4" textLength="48.2" lengthAdjust="spacingAndGlyphs">COMPREHENSION</text><text x="78.21" y="13.21" font-size="3.3" font-weight="normal" fill="#a0a0a0" textLength="43.07" lengthAdjust="spacingAndGlyphs">you how dry morning have which</text><text x="29.22" y="27.21" font-size="2.75" font-weight="normal" fill="#a0a0a0" textLength="5.0" lengthAdjust="spacingAndGlyphs">apply</text><text x="62.27" y="27.21" font-size="2.75" font-weight="normal" fill="#a0a0a0" textLength="10.0" lengthAdjust="spacingAndGlyphs">clean night</text><rect x="100.13" y="25.3" width="4.0" height="1.0" fill="#a0a0a0"/><text x="26.25" y="33.04" font-size="2.48" font-weight="normal" fill="#8a8a8a" textLength="10.94" lengthAdjust="spacingAndGlyphs">expensive</text><text x="23.52" y="38.92" font-size="2.48" font-weight="normal" fill="#8a8a8a" textLength="16.41" lengthAdjust="spacingAndGlyphs">use the night</text><text x="19.41" y="44.94" font-size="2.48" font-weight="normal" fill="#8a8a8a" textLength="24.61" lengthAdjust="spacingAndGlyphs">use dry expensive for</text><text x="24.2" y="50.82" font-size="2.48" font-weight="normal" fill="#8a8a8a" textLength="15.04" lengthAdjust="spacingAndGlyphs">the daily oil</text><text x="18.05" y="56.97" font-size="2.48" font-weight="normal" fill="#8a8a8a" textLength="27.34" lengthAdjust="spacingAndGlyphs">gentle products dry clean</text><text x="24.88" y="62.71" font-size="2.48" font-weight="normal" fill="#8a8a8a" textLength="13.67" lengthAdjust="spacingAndGlyphs">products gentle</text><rect x="54.96" y="23" width="0.5" height="42" fill="#2f2f2f"/><rect x="85.04" y="23" width="0.5" height="42" fill="#2f2f2f"/><rect x="54.96" y="38.56" width="62.9" height="0.5" fill="#2f2f2f"/><text x="7.4" y="70.53" font-size="2.2" font-weight="normal" fill="#5e5e5e" textLength="7.1" lengthAdjust="spacingAndGlyphs">what cream</text><rect x="125" y="68.7" width="1.5" height="1.2" fill="#6a6a6a"/></svg></div>
<div class="num" style="left:311px;top:493.6px">12</div>
<div class="slide" style="left:439px;top:402px"><i style="left:7.6px;top:7px;width:48.2px;height:57.8px;background:linear-gradient(90deg,#d8bc9c 0%,#d0b898 45%,#b8bcae 62%,#b4b8aa 100%);overflow:hidden;"><i style="left:-2.6px;top:-3px;width:28px;height:66px;background:#d8ba9a;border-radius:0 45% 20% 0"></i><i style="left:7.8px;top:12.8px;width:15.6px;height:4.3px;background:#6a5040;border-radius:50% 50% 0 0"></i><i style="left:11.3px;top:20.6px;width:9.5px;height:3.4px;background:#3a2820;border-radius:50%"></i><i style="left:-1.6px;top:29px;width:15px;height:34px;background:#c8a080;border-radius:40% 40% 0 0"></i><i style="left:6.4px;top:31px;width:16px;height:32px;background:#d0a888;border-radius:40% 40% 0 0"></i><i style="left:23.3px;top:38.2px;width:5.2px;height:20.8px;background:#5a2a28;"></i><i style="left:18.4px;top:25px;width:30px;height:33px;background:#c89474;clip-path:polygon(0.0% 12.1%,40.0% 0.0%,100.0% 30.3%,100.0% 100.0%,60.0% 100.0%,6.7% 48.5%);"></i><i style="left:28.4px;top:33px;width:18px;height:6px;background:#b88464;border-radius:50%;transform:rotate(35deg);opacity:0.7"></i><i style="left:26.4px;top:41px;width:18px;height:6px;background:#b88464;border-radius:50%;transform:rotate(40deg);opacity:0.7"></i></i><svg width="134" height="75" viewBox="0 0 134 75" style="left:0;top:0;font-family:Liberation Sans;font-weight:bold;text-rendering:geometricPrecision"><rect x="64.5" y="0.5" width="19.9" height="17.5" fill="url(#sqg)"/><text x="69.3" y="14.13" font-size="5.4" fill="#f0f0f0" stroke="#f0f0f0" stroke-width="0.4" textLength="28" lengthAdjust="spacingAndGlyphs">SPEAKING</text><text x="65.22" y="26.38" font-size="3.03" font-weight="normal" fill="#a0a0a0" textLength="54.69" lengthAdjust="spacingAndGlyphs">routine cream buy routine daily have</text><text x="65.22" y="31.76" font-size="2.75" font-weight="normal" fill="#8a8a8a" textLength="32.81" lengthAdjust="spacingAndGlyphs">water cream what night</text><text x="65.22" y="35.52" font-size="2.75" font-weight="normal" fill="#8a8a8a" textLength="30.76" lengthAdjust="spacingAndGlyphs">for gentle what skin dry</text><text x="65.22" y="39.28" font-size="2.75" font-weight="normal" fill="#8a8a8a" textLength="33.5" lengthAdjust="spacingAndGlyphs">your people routine which</text><text x="65.22" y="43.04" font-size="2.75" font-weight="normal" fill="#8a8a8a" textLength="41.7" lengthAdjust="spacingAndGlyphs">how still daily you routine still</text><text x="65.22" y="46.8" font-size="2.75" font-weight="normal" fill="#8a8a8a" textLength="40.33" lengthAdjust="spacingAndGlyphs">bad should which use daily morning</text><text x="65.22" y="50.56" font-size="2.75" font-weight="normal" fill="#8a8a8a" textLength="33.5" lengthAdjust="spacingAndGlyphs">oil oil dry water morning</text><text x="65.22" y="54.32" font-size="2.75" font-weight="normal" fill="#8a8a8a" textLength="33.5" lengthAdjust="spacingAndGlyphs">should dry expensive bad</text><text x="65.22" y="58.08" font-size="2.75" font-weight="normal" fill="#8a8a8a" textLength="28.03" lengthAdjust="spacingAndGlyphs">bad products your you</text><text x="65.22" y="61.84" font-size="2.75" font-weight="normal" fill="#8a8a8a" textLength="43.75" lengthAdjust="spacingAndGlyphs">face how use how what still for</text><text x="65.22" y="65.67" font-size="2.75" font-weight="normal" fill="#8a8a8a" textLength="34.86" lengthAdjust="spacingAndGlyphs">water people good use people</text><text x="7.4" y="70.53" font-size="2.2" font-weight="normal" fill="#5e5e5e" textLength="7.1" lengthAdjust="spacingAndGlyphs">night</text><rect x="125" y="68.7" width="1.5" height="1.2" fill="#6a6a6a"/></svg></div>
<div class="num" style="left:486px;top:493.6px">13</div>
<div class="slide" style="left:614px;top:402px"><svg width="134" height="75" viewBox="0 0 134 75" style="left:0;top:0;font-family:Liberation Sans;font-weight:bold;text-rendering:geometricPrecision"><rect x="4" y="0.5" width="23.6" height="21.5" fill="url(#sqg)"/><text x="14.2" y="13.83" font-size="5.4" fill="#f0f0f0" stroke="#f0f0f0" stroke-width="0.4" textLength="23.8" lengthAdjust="spacingAndGlyphs">PRACTICE</text><text x="72.05" y="13.21" font-size="3.3" font-weight="normal" fill="#a0a0a0" textLength="54.01" lengthAdjust="spacingAndGlyphs">water gentle oil for skin which</text><rect x="14.22" y="25.07" width="0.9" height="1.1" fill="#8a8a8a"/><text x="16.95" y="26.98" font-size="2.75" font-weight="normal" fill="#8a8a8a" textLength="49.64" lengthAdjust="spacingAndGlyphs">clean which your clean cream use routine</text><text x="16.95" y="30.4" font-size="2.75" font-weight="normal" fill="#8a8a8a" textLength="33.23" lengthAdjust="spacingAndGlyphs">you cream gentle still your</text><rect x="71.37" y="25.07" width="0.9" height="1.1" fill="#8a8a8a"/><text x="74.11" y="26.98" font-size="2.75" font-weight="normal" fill="#8a8a8a" textLength="52.63" lengthAdjust="spacingAndGlyphs">people cream water clean dry how what</text><text x="74.11" y="30.4" font-size="2.75" font-weight="normal" fill="#8a8a8a" textLength="38.28" lengthAdjust="spacingAndGlyphs">morning skin still care what</text><rect x="14.22" y="33.68" width="0.9" height="1.1" fill="#8a8a8a"/><text x="16.95" y="35.59" font-size="2.75" font-weight="normal" fill="#8a8a8a" textLength="49.64" lengthAdjust="spacingAndGlyphs">should you the products dry often how</text><text x="16.95" y="38.87" font-size="2.75" font-weight="normal" fill="#8a8a8a" textLength="47.58" lengthAdjust="spacingAndGlyphs">water buy face have have buy often</text><rect x="71.37" y="33.68" width="0.9" height="1.1" fill="#8a8a8a"/><text x="74.11" y="35.59" font-size="2.75" font-weight="normal" fill="#8a8a8a" textLength="52.63" lengthAdjust="spacingAndGlyphs">people care the still face care morning</text><text x="74.11" y="38.87" font-size="2.75" font-weight="normal" fill="#8a8a8a" textLength="38.28" lengthAdjust="spacingAndGlyphs">still oil what expensive buy</text><rect x="14.22" y="41.75" width="0.9" height="1.1" fill="#8a8a8a"/><text x="16.95" y="43.66" font-size="2.75" font-weight="normal" fill="#8a8a8a" textLength="49.64" lengthAdjust="spacingAndGlyphs">products morning for clean oil face</text><text x="16.95" y="46.8" font-size="2.75" font-weight="normal" fill="#8a8a8a" textLength="44.85" lengthAdjust="spacingAndGlyphs">the the morning often cream night</text><rect x="71.37" y="41.75" width="0.9" height="1.1" fill="#8a8a8a"/><text x="74.11" y="43.66" font-size="2.75" font-weight="normal" fill="#8a8a8a" textLength="52.63" lengthAdjust="spacingAndGlyphs">water should water water skin which morning</text><text x="74.11" y="46.8" font-size="2.75" font-weight="normal" fill="#8a8a8a" textLength="34.18" lengthAdjust="spacingAndGlyphs">routine skin for you which</text><rect x="14.22" y="49.68" width="0.9" height="1.1" fill="#8a8a8a"/><text x="16.95" y="51.59" font-size="2.75" font-weight="normal" fill="#8a8a8a" textLength="49.64" lengthAdjust="spacingAndGlyphs">people oil face what gentle face you</text><text x="16.95" y="55.01" font-size="2.75" font-weight="normal" fill="#8a8a8a" textLength="44.85" lengthAdjust="spacingAndGlyphs">care use which gentle dry for the</text><rect x="71.37" y="49.68" width="0.9" height="1.1" fill="#8a8a8a"/><text x="74.11" y="51.59" font-size="2.75" font-weight="normal" fill="#8a8a8a" textLength="52.63" lengthAdjust="spacingAndGlyphs">daily products your you for morning for</text><text x="74.11" y="55.01" font-size="2.75" font-weight="normal" fill="#8a8a8a" textLength="47.85" lengthAdjust="spacingAndGlyphs">face often face oil daily buy you</text><rect x="14.22" y="57.88" width="0.9" height="1.1" fill="#8a8a8a"/><text x="16.95" y="59.79" font-size="2.75" font-weight="normal" fill="#8a8a8a" textLength="49.64" lengthAdjust="spacingAndGlyphs">good face you which routine have dry</text><text x="16.95" y="63.21" font-size="2.75" font-weight="normal" fill="#8a8a8a" textLength="21.61" lengthAdjust="spacingAndGlyphs">routine your skin</text><rect x="71.37" y="57.88" width="0.9" height="1.1" fill="#8a8a8a"/><text x="74.11" y="59.79" font-size="2.75" font-weight="normal" fill="#8a8a8a" textLength="52.63" lengthAdjust="spacingAndGlyphs">have which routine routine good dry how</text><text x="74.11" y="63.21" font-size="2.75" font-weight="normal" fill="#8a8a8a" textLength="32.13" lengthAdjust="spacingAndGlyphs">night expensive people</text><text x="7.4" y="70.53" font-size="2.2" font-weight="normal" fill="#5e5e5e" textLength="7.1" lengthAdjust="spacingAndGlyphs">bad use</text><rect x="125" y="68.7" width="1.5" height="1.2" fill="#6a6a6a"/></svg></div>
<div class="num" style="left:661px;top:493.6px">14</div>
<div class="slide" style="left:788px;top:402px"><i style="left:0px;top:0px;width:46px;height:31px;background:linear-gradient(#dccfb6,#d6c8aa);overflow:hidden;"></i><i style="left:0px;top:30.2px;width:56.2px;height:27.2px;background:linear-gradient(#d8caac,#e0d4bc);overflow:hidden;"></i><i style="left:20px;top:12px;width:21px;height:20px;background:transparent;border:0.7px solid #a89c80;border-radius:40% 40% 20% 20%;opacity:0.65"></i><i style="left:21px;top:17px;width:19px;height:1px;background:#b0a488;opacity:0.7"></i><i style="left:21px;top:22px;width:19px;height:1px;background:#b0a488;opacity:0.6"></i><i style="left:22px;top:26px;width:17px;height:1px;background:#b8ac90;opacity:0.5"></i><i style="left:25px;top:8px;width:5px;height:5px;background:#a09478;border-radius:50%;opacity:0.6"></i><i style="left:13.4px;top:34.5px;width:34.2px;height:6.0px;background:#ac9c7c;border-radius:30%"></i><i style="left:16px;top:36px;width:29px;height:2.5px;background:#d6ccb4;border-radius:40%"></i><i style="left:27.5px;top:39.5px;width:5.0px;height:3.0px;background:#6a5a40;border-radius:50%"></i><i style="left:14.5px;top:40.5px;width:0.6px;height:16.9px;background:#c0b090;"></i><svg width="134" height="75" viewBox="0 0 134 75" style="left:0;top:0;font-family:Liberation Sans;font-weight:bold;text-rendering:geometricPrecision"><text x="69.7" y="13.83" font-size="5.4" fill="#f0f0f0" stroke="#f0f0f0" stroke-width="0.4" textLength="23.8" lengthAdjust="spacingAndGlyphs">PRACTICE</text><text x="69.73" y="20.92" font-size="3.03" font-weight="normal" fill="#a0a0a0" textLength="43.75" lengthAdjust="spacingAndGlyphs">for good often care morning</text><text x="69.73" y="28.35" font-size="2.75" font-weight="normal" fill="#8a8a8a" textLength="37.19" lengthAdjust="spacingAndGlyphs">clean gentle use how bad buy</text><text x="69.73" y="34.5" font-size="2.75" font-weight="normal" fill="#8a8a8a" textLength="54.96" lengthAdjust="spacingAndGlyphs">the people cream people apply which expensive</text><text x="69.73" y="38.6" font-size="2.75" font-weight="normal" fill="#8a8a8a" textLength="48.13" lengthAdjust="spacingAndGlyphs">your clean apply morning what people</text><text x="69.73" y="42.43" font-size="2.75" font-weight="normal" fill="#8a8a8a" textLength="45.39" lengthAdjust="spacingAndGlyphs">routine should for gentle how for</text><text x="69.73" y="46.53" font-size="2.75" font-weight="normal" fill="#8a8a8a" textLength="41.97" lengthAdjust="spacingAndGlyphs">night gentle should skin which</text><text x="69.73" y="50.91" font-size="2.75" font-weight="normal" fill="#8a8a8a" textLength="48.81" lengthAdjust="spacingAndGlyphs">water dry care clean care often products</text><text x="69.73" y="54.73" font-size="2.75" font-weight="normal" fill="#8a8a8a" textLength="52.23" lengthAdjust="spacingAndGlyphs">routine oil for products use gentle cream</text><text x="7.4" y="70.53" font-size="2.2" font-weight="normal" fill="#5e5e5e" textLength="7.1" lengthAdjust="spacingAndGlyphs">use care</text><rect x="125" y="68.7" width="1.5" height="1.2" fill="#6a6a6a"/></svg></div>
<div class="num" style="left:835px;top:493.6px">15</div>
<div class="slide" style="left:90px;top:532px"><i style="left:61.3px;top:11.7px;width:62.6px;height:52.4px;background:linear-gradient(#c4c2bc,#bcbab4);overflow:hidden;"><i style="left:0.0px;top:0.0px;width:38.7px;height:28.3px;background:#b47a54;clip-path:polygon(0.0% 0.0%,74.2% 0.0%,100.0% 64.7%,89.7% 100.0%,48.3% 71.7%,0.0% 64.7%);"></i><i style="left:0.0px;top:4.3px;width:30.7px;height:11px;background:#c8946e;border-radius:0 50% 50% 0"></i><i style="left:34.7px;top:2.3px;width:28px;height:32px;background:#c08a6a;clip-path:polygon(17.9% 12.5%,42.9% 0.0%,78.6% 0.0%,92.9% 31.2%,78.6% 62.5%,100.0% 81.2%,50.0% 100.0%,0.0% 87.5%);"></i><i style="left:4.7px;top:24.3px;width:58px;height:28.1px;background:#c9a282;clip-path:polygon(10.3% 100.0%,24.1% 35.6%,48.3% 7.1%,75.9% 14.2%,100.0% 21.4%,86.2% 71.2%,58.6% 100.0%);"></i><i style="left:31.7px;top:26.8px;width:5px;height:10.5px;background:#f0ece6;border-radius:40%"></i><i style="left:28.7px;top:22.3px;width:7px;height:6px;background:#8a4a30;border-radius:40%"></i></i><svg width="134" height="75" viewBox="0 0 134 75" style="left:0;top:0;font-family:Liberation Sans;font-weight:bold;text-rendering:geometricPrecision"><rect x="4" y="0.5" width="24.3" height="33.3" fill="url(#sqg)"/><text x="14.2" y="15.08" font-size="5.4" fill="#f0f0f0" stroke="#f0f0f0" stroke-width="0.4" textLength="28" lengthAdjust="spacingAndGlyphs">SPEAKING</text><text x="14.22" y="21.78" font-size="3.58" font-weight="normal" fill="#a0a0a0" textLength="35.28" lengthAdjust="spacingAndGlyphs">oil night cream morning</text><text x="14.22" y="25.88" font-size="3.58" font-weight="normal" fill="#a0a0a0" textLength="31.17" lengthAdjust="spacingAndGlyphs">the products skin</text><text x="14.22" y="46.3" font-size="3.3" font-weight="bold" fill="#bdbdbd" textLength="25.7" lengthAdjust="spacingAndGlyphs">face buy should</text><text x="14.22" y="51.18" font-size="2.75" font-weight="normal" fill="#8a8a8a" textLength="27.07" lengthAdjust="spacingAndGlyphs">often clean oil what</text><text x="14.22" y="55.01" font-size="2.75" font-weight="normal" fill="#8a8a8a" textLength="20.24" lengthAdjust="spacingAndGlyphs">you still you</text><text x="14.22" y="58.7" font-size="2.75" font-weight="normal" fill="#8a8a8a" textLength="26.39" lengthAdjust="spacingAndGlyphs">good the morning have</text><text x="7.4" y="70.53" font-size="2.2" font-weight="normal" fill="#5e5e5e" textLength="7.1" lengthAdjust="spacingAndGlyphs">water</text><rect x="125" y="68.7" width="1.5" height="1.2" fill="#6a6a6a"/></svg></div>
<div class="num" style="left:137px;top:623.8px">16</div>
<div class="slide" style="left:264px;top:532px"><i style="left:61.3px;top:11.7px;width:62.6px;height:52.4px;background:linear-gradient(90deg,#c4ccc4 0%,#e2e2da 30%,#d4d0c4 60%,#c0b0a0 100%);overflow:hidden;"><i style="left:-0.3px;top:0.3px;width:15px;height:18px;background:#e8e8e2;border-radius:30%;opacity:0.8"></i><i style="left:8.7px;top:34.3px;width:16px;height:18px;background:#d6e0da;border-radius:30%;opacity:0.8"></i><i style="left:5.2px;top:19.3px;width:9.8px;height:15.2px;background:#2a1a18;border-radius:40%;transform:rotate(-30deg)"></i><i style="left:6.7px;top:18.3px;width:12px;height:6px;background:#6a3020;border-radius:40%;transform:rotate(15deg)"></i><i style="left:28.7px;top:8.3px;width:34px;height:44.1px;background:#c89070;clip-path:polygon(14.7% 11.3%,64.7% 2.3%,100.0% 9.1%,100.0% 100.0%,29.4% 100.0%,0.0% 68.0%);"></i><i style="left:18.7px;top:5.3px;width:17px;height:20px;background:#c08464;border-radius:45%;transform:rotate(-25deg)"></i><i style="left:24.7px;top:-1.7px;width:34px;height:18px;background:#2a2018;clip-path:polygon(5.9% 27.8%,41.2% 2.8%,88.2% 11.1%,97.1% 66.7%,58.8% 94.4%,23.5% 72.2%);"></i><i style="left:2.7px;top:24.3px;width:46px;height:28.1px;background:#c48a68;clip-path:polygon(4.3% 92.5%,43.5% 35.6%,82.6% 3.6%,97.8% 17.8%,56.5% 71.2%,23.9% 100.0%);"></i><i style="left:51.6px;top:36.1px;width:11.1px;height:4.2px;background:#80c0b0;border-radius:30%"></i></i><svg width="134" height="75" viewBox="0 0 134 75" style="left:0;top:0;font-family:Liberation Sans;font-weight:bold;text-rendering:geometricPrecision"><rect x="4" y="0.5" width="24.3" height="33.3" fill="url(#sqg)"/><text x="14.2" y="15.08" font-size="5.4" fill="#f0f0f0" stroke="#f0f0f0" stroke-width="0.4" textLength="28" lengthAdjust="spacingAndGlyphs">SPEAKING</text><text x="14.22" y="21.78" font-size="3.58" font-weight="normal" fill="#a0a0a0" textLength="35.28" lengthAdjust="spacingAndGlyphs">night night often gentle</text><text x="14.22" y="25.88" font-size="3.58" font-weight="normal" fill="#a0a0a0" textLength="31.17" lengthAdjust="spacingAndGlyphs">people for dry bad</text><text x="14.22" y="46.3" font-size="3.3" font-weight="bold" fill="#bdbdbd" textLength="29.81" lengthAdjust="spacingAndGlyphs">water which products</text><text x="14.22" y="51.18" font-size="2.75" font-weight="normal" fill="#8a8a8a" textLength="18.87" lengthAdjust="spacingAndGlyphs">care should night</text><text x="14.22" y="55.01" font-size="2.75" font-weight="normal" fill="#8a8a8a" textLength="18.87" lengthAdjust="spacingAndGlyphs">bad what buy</text><text x="14.22" y="58.7" font-size="2.75" font-weight="normal" fill="#8a8a8a" textLength="26.39" lengthAdjust="spacingAndGlyphs">products oil people</text><text x="7.4" y="70.53" font-size="2.2" font-weight="normal" fill="#5e5e5e" textLength="7.1" lengthAdjust="spacingAndGlyphs">your buy</text><rect x="125" y="68.7" width="1.5" height="1.2" fill="#6a6a6a"/></svg></div>
<div class="num" style="left:311px;top:623.8px">17</div>
<div class="slide" style="left:439px;top:532px"><i style="left:61.3px;top:11.7px;width:62.6px;height:52.4px;background:linear-gradient(#ece4d4,#e8dcc8 60%,#e0d2bc);overflow:hidden;"><i style="left:0.0px;top:0.0px;width:62.6px;height:3.3px;background:#d8ccb8;"></i><i style="left:0.0px;top:28.3px;width:62.6px;height:1px;background:#d0c4b0;"></i><i style="left:0.0px;top:21.3px;width:13.0px;height:31.1px;background:#c8b8a0;"></i><i style="left:0.0px;top:19.3px;width:10.7px;height:2.5px;background:#b8a890;"></i><i style="left:12.6px;top:25.3px;width:9.8px;height:6px;background:#b8a890;border-radius:40%"></i><i style="left:16.7px;top:6.9px;width:3.2px;height:7.4px;background:#2a2220;border-radius:40% 40% 0 0"></i><i style="left:15.7px;top:14.3px;width:6px;height:14px;background:#f4f0ea;"></i><i style="left:35.8px;top:9.3px;width:13.0px;height:17.9px;background:#b88858;border-radius:2px"></i><i style="left:56.2px;top:17.3px;width:6.5px;height:12px;background:#c8a888;border-radius:40%"></i><i style="left:20.7px;top:38.3px;width:4.9px;height:14.1px;background:#c8a888;border-radius:40% 40% 0 0"></i><i style="left:44.6px;top:37.3px;width:6.5px;height:8px;background:#1e1814;border-radius:40%"></i><i style="left:33.7px;top:47.8px;width:6px;height:3.0px;background:#3a3028;"></i><i style="left:56.7px;top:42.3px;width:5.9px;height:10.1px;background:#c0b098;"></i></i><svg width="134" height="75" viewBox="0 0 134 75" style="left:0;top:0;font-family:Liberation Sans;font-weight:bold;text-rendering:geometricPrecision"><rect x="4" y="0.5" width="24.3" height="33.3" fill="url(#sqg)"/><text x="14.2" y="15.08" font-size="5.4" fill="#f0f0f0" stroke="#f0f0f0" stroke-width="0.4" textLength="28" lengthAdjust="spacingAndGlyphs">SPEAKING</text><text x="14.22" y="21.78" font-size="3.58" font-weight="normal" fill="#a0a0a0" textLength="35.28" lengthAdjust="spacingAndGlyphs">which you how good</text><text x="14.22" y="25.88" font-size="3.58" font-weight="normal" fill="#a0a0a0" textLength="31.17" lengthAdjust="spacingAndGlyphs">face still which</text><text x="14.22" y="46.3" font-size="3.3" font-weight="bold" fill="#bdbdbd" textLength="35.28" lengthAdjust="spacingAndGlyphs">often water expensive</text><text x="14.22" y="51.18" font-size="2.75" font-weight="normal" fill="#8a8a8a" textLength="38.01" lengthAdjust="spacingAndGlyphs">daily daily cream cream gentle</text><text x="14.22" y="55.01" font-size="2.75" font-weight="normal" fill="#8a8a8a" textLength="31.17" lengthAdjust="spacingAndGlyphs">oil oil for how water</text><text x="14.22" y="58.7" font-size="2.75" font-weight="normal" fill="#8a8a8a" textLength="29.81" lengthAdjust="spacingAndGlyphs">good water water have</text><text x="7.4" y="70.53" font-size="2.2" font-weight="normal" fill="#5e5e5e" textLength="7.1" lengthAdjust="spacingAndGlyphs">daily</text><rect x="125" y="68.7" width="1.5" height="1.2" fill="#6a6a6a"/></svg></div>
<div class="num" style="left:486px;top:623.8px">18</div>
<div class="slide" style="left:614px;top:532px"><svg width="134" height="75" viewBox="0 0 134 75" style="left:0;top:0;font-family:Liberation Sans;font-weight:bold;text-rendering:geometricPrecision"><rect x="7.4" y="6.8" width="44.8" height="44.8" fill="#323232"/><text x="39.2" y="30.17" font-size="9.4" fill="#f2f2f2" stroke="#f2f2f2" stroke-width="0.45" textLength="78.5" lengthAdjust="spacingAndGlyphs">ANY QUESTIONS?</text><text x="7.4" y="70.53" font-size="2.2" font-weight="normal" fill="#5e5e5e" textLength="7.1" lengthAdjust="spacingAndGlyphs">for night</text></svg></div>
<div class="num" style="left:661px;top:623.8px">19</div>
<div id="frame"></div>
</div>
</body></html>
